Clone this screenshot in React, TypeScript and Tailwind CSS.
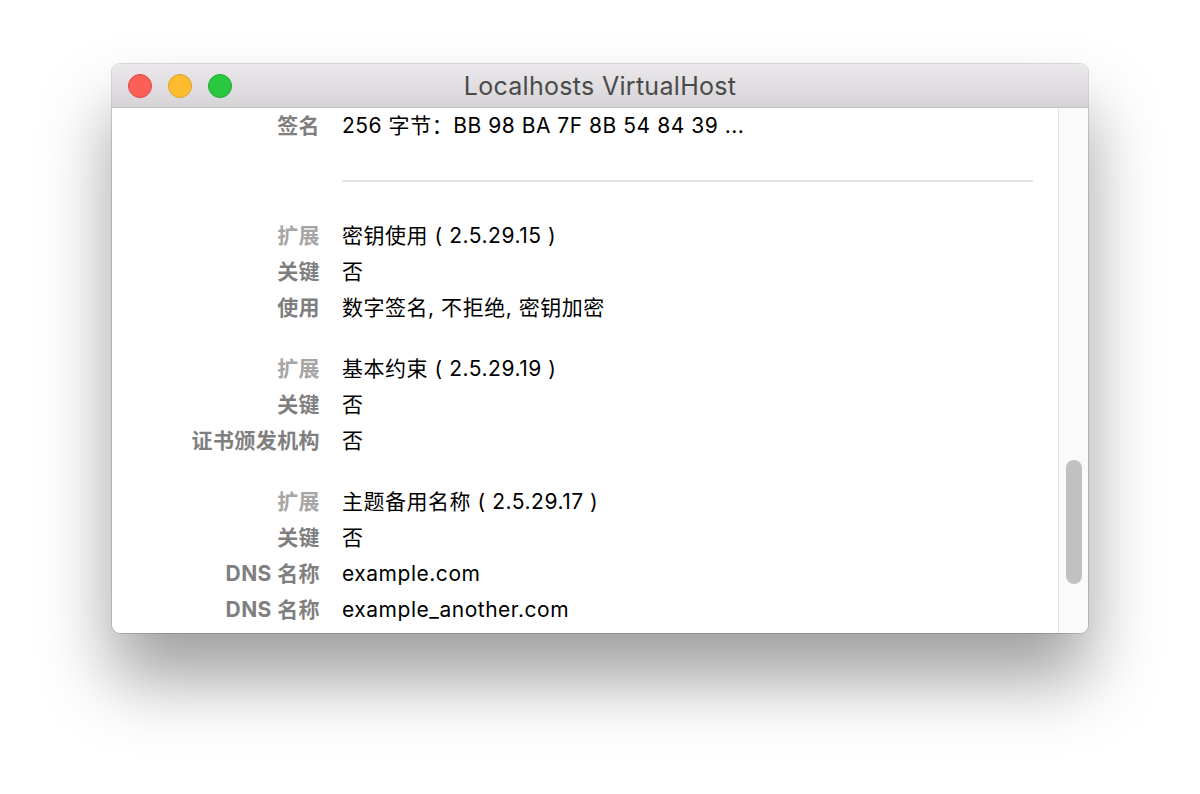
import React from "react";

type Row = { label: string; value: string; tone?: "light" | "dark" };

const font = { fontFamily: 'Inter, "Noto Sans CJK SC", sans-serif' };

const groups: Row[][] = [
  [
    { label: "扩展", value: "密钥使用 ( 2.5.29.15 )", tone: "light" },
    { label: "关键", value: "否" },
    { label: "使用", value: "数字签名, 不拒绝, 密钥加密" },
  ],
  [
    { label: "扩展", value: "基本约束 ( 2.5.29.19 )", tone: "light" },
    { label: "关键", value: "否" },
    { label: "证书颁发机构", value: "否" },
  ],
  [
    { label: "扩展", value: "主题备用名称 ( 2.5.29.17 )", tone: "light" },
    { label: "关键", value: "否" },
    { label: "DNS 名称", value: "example.com" },
    { label: "DNS 名称", value: "example_another.com" },
  ],
];

const InfoRow = ({ label, value, tone }: Row) => (
  <div className="flex h-[36px] items-center">
    <div
      className={`w-[208px] shrink-0 text-right font-bold tracking-[0.02em] ${
        tone === "light" ? "text-[#a6a6a6]" : "text-[#7f7f7f]"
      }`}
    >
      {label}
    </div>
    <div className="ml-[22px] tracking-[0.025em] text-black">{value}</div>
  </div>
);

export default function App() {
  return (
    <div className="min-h-[794px] w-[1200px] bg-white pl-[112px] pt-[64px]" style={font}>
      <div className="flex h-[569px] w-[976px] flex-col overflow-hidden rounded-[8px] bg-white shadow-[0_46px_70px_rgba(0,0,0,0.38),0_0_0_1px_rgba(0,0,0,0.14)]">
        {/* title bar */}
        <div className="relative flex h-[44px] shrink-0 items-center justify-center border-b border-[#c2c0c2] bg-gradient-to-b from-[#ebe9eb] to-[#d5d3d5] pt-[3px]">
          <div className="absolute left-[16px] top-[10px] flex gap-[16px]">
            <span className="h-[24px] w-[24px] rounded-full border border-[#e2463f] bg-[#fc5f57]" />
            <span className="h-[24px] w-[24px] rounded-full border border-[#e0a228] bg-[#fdbc2e]" />
            <span className="h-[24px] w-[24px] rounded-full border border-[#1ea934] bg-[#29c840]" />
          </div>
          <span className="text-[25px] tracking-[0.012em] text-[#4a4a4a]">Localhosts VirtualHost</span>
        </div>

        {/* body */}
        <div className="flex min-h-0 flex-1 text-[21px]">
          <div className="flex-1 pr-[25px]">
            <InfoRow label="签名" value="256 字节：BB 98 BA 7F 8B 54 84 39 ..." />
            <div className="ml-[230px] mb-[36px] mt-[36px] h-[2px] bg-[#e4e4e4]" />
            {groups.map((rows, i) => (
              <div key={i} className={i > 0 ? "mt-[25px]" : ""}>
                {rows.map((r, j) => (
                  <InfoRow key={j} {...r} />
                ))}
              </div>
            ))}
          </div>

          {/* scrollbar */}
          <div className="relative w-[30px] shrink-0 border-l border-[#e4e4e4] bg-[#fafafa]">
            <div className="absolute left-[7px] top-[352px] h-[124px] w-[16px] rounded-full bg-[#c1c1c1]" />
          </div>
        </div>
      </div>
    </div>
  );
}
